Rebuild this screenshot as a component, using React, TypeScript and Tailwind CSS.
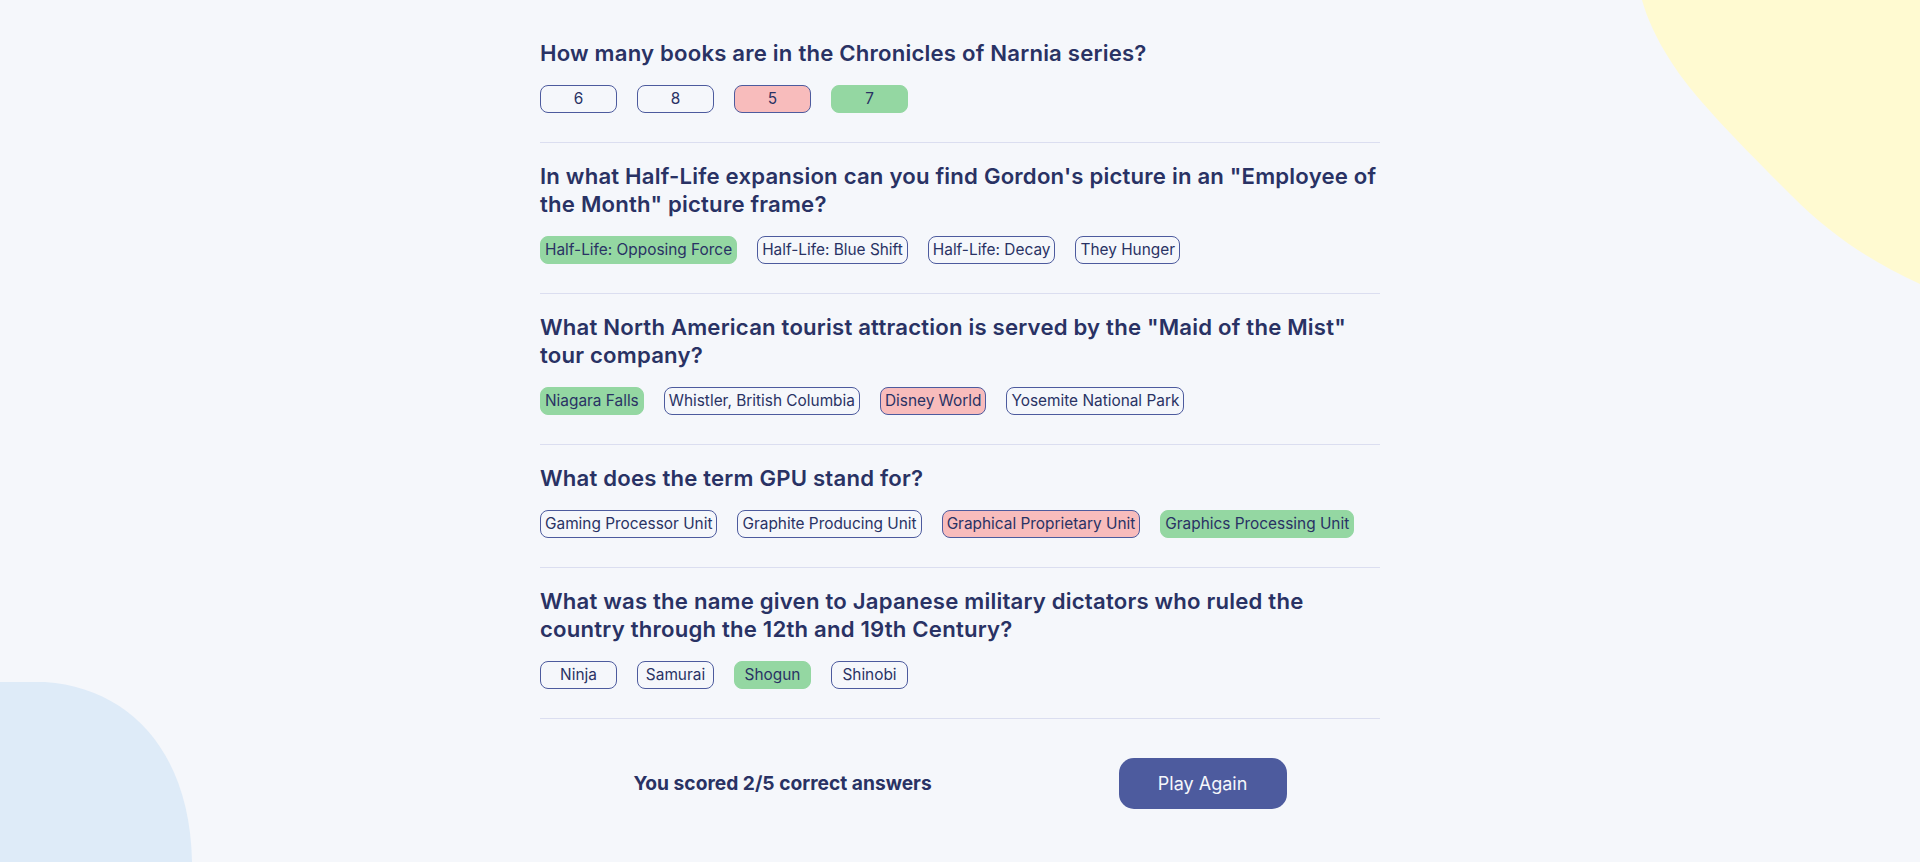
import React from "react"

type Question = {
	question: string
	answers: string[]
	correct: string
	picked: string
}

const questions: Question[] = [
	{
		question: "How many books are in the Chronicles of Narnia series?",
		answers: ["6", "8", "5", "7"],
		correct: "7",
		picked: "5",
	},
	{
		question: "In what Half-Life expansion can you find Gordon's picture in an \"Employee of the Month\" picture frame?",
		answers: ["Half-Life: Opposing Force", "Half-Life: Blue Shift", "Half-Life: Decay", "They Hunger"],
		correct: "Half-Life: Opposing Force",
		picked: "Half-Life: Opposing Force",
	},
	{
		question: "What North American tourist attraction is served by the \"Maid of the Mist\" tour company?",
		answers: ["Niagara Falls", "Whistler, British Columbia", "Disney World", "Yosemite National Park"],
		correct: "Niagara Falls",
		picked: "Disney World",
	},
	{
		question: "What does the term GPU stand for?",
		answers: ["Gaming Processor Unit", "Graphite Producing Unit", "Graphical Proprietary Unit", "Graphics Processing Unit"],
		correct: "Graphics Processing Unit",
		picked: "Graphical Proprietary Unit",
	},
	{
		question: "What was the name given to Japanese military dictators who ruled the country through the 12th and 19th Century?",
		answers: ["Ninja", "Samurai", "Shogun", "Shinobi"],
		correct: "Shogun",
		picked: "Shogun",
	},
]

const AnswerButton = ({ text, correct, picked }: { text: string; correct: boolean; picked: boolean }) => {
	let style = "border border-[#4d5b9e] bg-transparent"
	if (correct) style = "border border-[#94d7a2] bg-[#94d7a2]"
	else if (picked) style = "border border-[#4d5b9e] bg-[#f8bcbc]"

	return (
		<button
			type="button"
			className={`h-7 min-w-[77px] rounded-lg px-1 text-[15.4px] leading-none text-[#293264] ${style}`}
		>
			{text}
		</button>
	)
}

const App = () => {
	return (
		<div className="relative min-h-screen overflow-hidden bg-[#f5f7fb] font-['Inter',sans-serif] text-[#293264]">
			{/* blobs */}
			<svg className="absolute right-0 top-0" width="278" height="284" viewBox="0 0 278 284">
				<path d="M0 0 H278 V284 C230 262 190 236 150 196 C100 146 50 96 28 60 C14 38 5 18 0 0 Z" fill="#fffad1" />
			</svg>
			<svg className="absolute bottom-0 left-0" width="194" height="180" viewBox="0 0 194 180">
				<path d="M0 0 H45 C130 6 190 70 192 180 H0 Z" fill="#deebf8" />
			</svg>

			<div className="relative mx-auto w-[840px] pt-5">
				{questions.map((q) => (
					<div key={q.question} className="border-b border-[#dbdef0] pb-[29px] pt-[19px]">
						<h2 className="font-['Inter',sans-serif] text-[22.15px] font-semibold leading-7 tracking-[0.2px]">
							{q.question}
						</h2>
						<div className="mt-[18px] flex gap-5">
							{q.answers.map((a) => (
								<AnswerButton key={a} text={a} correct={a === q.correct} picked={a === q.picked} />
							))}
						</div>
					</div>
				))}

				<div className="mt-[39px] flex items-center justify-around">
					<p className="text-[19.2px] font-bold">You scored 2/5 correct answers</p>
					<button
						type="button"
						className="h-[51px] w-[168px] rounded-[15px] bg-[#4d5b9e] text-[18px] text-[#f5f7fb]"
					>
						Play Again
					</button>
				</div>
			</div>
		</div>
	)
}

export default App
